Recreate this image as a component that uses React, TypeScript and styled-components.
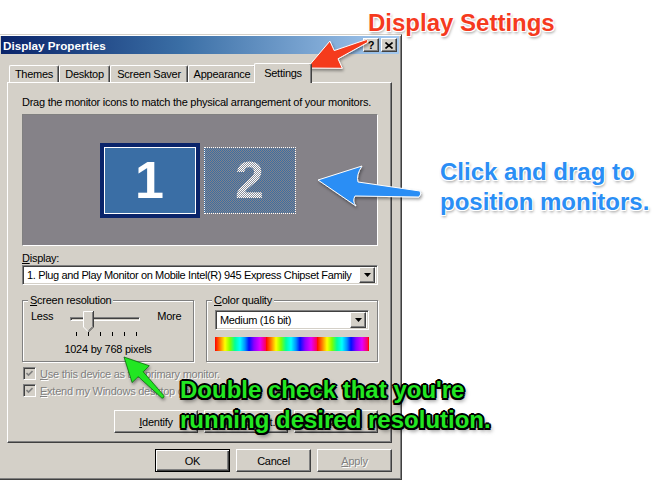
import React from "react";
import styled, { createGlobalStyle, css } from "styled-components";

const FACE = "#d4d0c8";
const SHADOW = "#808080";
const DARK = "#404040";

const GlobalStyle = createGlobalStyle`
  html, body { margin: 0; padding: 0; background: #fff; }
  body {
    font-family: "Liberation Sans", Arial, sans-serif;
    font-size: 11px;
    color: #000;
  }
`;

const Page = styled.div`
  position: relative;
  width: 655px;
  height: 484px;
  overflow: hidden;
  padding-top: 34px;
  box-sizing: border-box;
  background: #fff;
`;

const Window = styled.div`
  width: 402px;
  height: 446px;
  box-sizing: border-box;
  background: ${FACE};
  border-top: 1px solid ${FACE};
  border-right: 1px solid ${DARK};
  border-bottom: 1px solid ${DARK};
  box-shadow: inset 0 1px #fff, inset -1px -1px ${SHADOW};
  padding: 1px 2px 2px 1px;
  display: flex;
  flex-direction: column;
  letter-spacing: -0.25px;
`;

const TitleBar = styled.div`
  height: 18px;
  display: flex;
  align-items: center;
  justify-content: space-between;
  padding: 0 2px;
  background: linear-gradient(90deg, #0a246a 0%, #3a6ea5 45%, #a6caf0 100%);
  color: #fff;
  font-weight: bold;
  font-size: 11.7px;
  letter-spacing: 0;
`;

const CaptionButtons = styled.div`
  display: flex;
  gap: 2px;
`;

const raised = css`
  background: ${FACE};
  border: 1px solid;
  border-color: #fff ${DARK} ${DARK} #fff;
  box-shadow: inset -1px -1px ${SHADOW};
`;

const CaptionButton = styled.div`
  ${raised};
  width: 16px;
  height: 14px;
  box-sizing: border-box;
  display: flex;
  align-items: center;
  justify-content: center;
  color: #000;
  font-size: 11px;
  font-weight: bold;
  line-height: 1;
`;

const Body = styled.div`
  flex: 1;
  display: flex;
  flex-direction: column;
  padding: 9px 7px 0 6px;
`;

const TabRow = styled.div`
  display: flex;
  align-items: flex-end;
  height: 19px;
  padding-left: 2px;
  position: relative;
  z-index: 1;
`;

const Tab = styled.div<{ $active?: boolean; $w: number }>`
  width: ${(p) => p.$w}px;
  height: ${(p) => (p.$active ? "20px" : "17px")};
  box-sizing: border-box;
  padding-bottom: ${(p) => (p.$active ? "2px" : "0")};
  margin: ${(p) => (p.$active ? "0 -2px -1px" : "0")};
  display: flex;
  align-items: center;
  justify-content: center;
  background: ${FACE};
  border-top: 1px solid #fff;
  border-left: 1px solid #fff;
  border-right: 1px solid ${DARK};
  border-radius: 2px 2px 0 0;
  box-shadow: inset -1px 0 ${SHADOW};
  position: relative;
  z-index: ${(p) => (p.$active ? 2 : 1)};
`;

const Panel = styled.div`
  height: 361px;
  box-sizing: border-box;
  border: 1px solid;
  border-color: #fff ${DARK} ${DARK} #fff;
  box-shadow: inset -1px -1px ${SHADOW};
  padding: 13px 13px 9px 14px;
  display: flex;
  flex-direction: column;
`;

const Line = styled.div`
  line-height: 13px;
  white-space: nowrap;
`;

const Arrangement = styled.div`
  height: 132px;
  margin-top: 5px;
  box-sizing: border-box;
  border: 1px solid;
  border-color: ${SHADOW} #fff #fff ${SHADOW};
  background: #858288;
  display: flex;
  align-items: center;
  justify-content: center;
  gap: 4px;
  padding-right: 5px;
`;

const Digit = styled.span`
  font-family: "Liberation Sans", Arial, sans-serif;
  font-weight: bold;
  font-size: 52px;
  line-height: 1;
  letter-spacing: 0;
`;

const MonitorPrimary = styled.div`
  width: 100px;
  height: 75px;
  box-sizing: border-box;
  border: 4px solid #0a246a;
  box-shadow: inset 0 0 0 1px #fff;
  background: #3a6ea5;
  display: flex;
  align-items: center;
  justify-content: center;
  color: #fff;
`;

const MonitorSecondary = styled.div`
  width: 92px;
  height: 67px;
  box-sizing: border-box;
  border: 1px dotted #fff;
  background-color: #5f7896;
  background-image: repeating-conic-gradient(#3a6ea5 0 25%, #858288 0 50%);
  background-size: 2px 2px;
  display: flex;
  align-items: center;
  justify-content: center;
`;

const DitherDigit = styled(Digit)`
  color: transparent;
  background-image: repeating-conic-gradient(#ffffff 0 25%, #8a8f9c 0 50%);
  background-size: 2px 2px;
  -webkit-background-clip: text;
  background-clip: text;
`;

const Label = styled(Line)`
  margin-top: 6px;
`;

const Combo = styled.div<{ $width?: number }>`
  height: 20px;
  width: ${(p) => (p.$width ? `${p.$width}px` : "auto")};
  box-sizing: border-box;
  border: 1px solid;
  border-color: ${SHADOW} #fff #fff ${SHADOW};
  box-shadow: inset 1px 1px ${DARK}, inset -1px -1px ${FACE};
  background: #fff;
  display: flex;
  align-items: center;
  padding: 2px 2px 2px 4px;
  gap: 2px;
`;

const ComboText = styled.div`
  flex: 1;
  white-space: nowrap;
  overflow: hidden;
  line-height: 14px;
  letter-spacing: -0.36px;
`;

const ComboButton = styled.div`
  ${raised};
  width: 16px;
  height: 16px;
  box-sizing: border-box;
  display: flex;
  align-items: center;
  justify-content: center;
  flex: none;
`;

const Groups = styled.div`
  display: grid;
  grid-template-columns: 172px 172px;
  justify-content: space-between;
  margin-top: 9px;
`;

const Group = styled.fieldset`
  margin: 0;
  height: 68px;
  box-sizing: border-box;
  padding: 3px 8px 0 8px;
  border: 1px solid ${SHADOW};
  box-shadow: inset 1px 1px #fff, 1px 1px #fff;
  min-width: 0;
`;

const Legend = styled.legend`
  padding: 0 2px;
  margin-left: -3px;
  line-height: 13px;
  background: ${FACE};
`;

const SliderRow = styled.div`
  display: flex;
  align-items: flex-start;
  gap: 17px;
  line-height: 13px;
`;

const Slider = styled.div`
  position: relative;
  width: 70px;
  height: 26px;
  margin-top: 1px;
`;

const Track = styled.div`
  position: absolute;
  left: 0;
  right: 0;
  top: 6px;
  height: 4px;
  box-sizing: border-box;
  border: 1px solid;
  border-color: ${SHADOW} #fff #fff ${SHADOW};
  box-shadow: inset 1px 1px ${DARK};
`;

const Thumb = styled.svg`
  position: absolute;
  left: 13px;
  top: 0;
`;

const Ticks = styled.div`
  position: absolute;
  left: 6px;
  right: 3px;
  top: 21px;
  display: flex;
  justify-content: space-between;
`;

const TickMark = styled.span`
  width: 1px;
  height: 4px;
  background: #000;
`;

const Resolution = styled(Line)`
  margin-top: 6px;
  text-align: center;
`;

const ColorBar = styled.div`
  height: 14px;
  margin-top: 7px;
  background: repeating-linear-gradient(
    90deg,
    #ff0000 0px,
    #ff7a00 5px,
    #ffff00 10px,
    #80ff00 15px,
    #00ff9a 20px,
    #00ffff 25px,
    #0090ff 30px,
    #0010ff 34px,
    #8a00ff 39px,
    #e000ff 45px,
    #ff0050 51px
  );
`;

const CheckRow = styled.div<{ $first?: boolean }>`
  display: flex;
  align-items: center;
  gap: 4px;
  margin-top: ${(p) => (p.$first ? "5px" : "4px")};
  margin-left: 1px;
  height: 13px;
`;

const CheckBox = styled.div`
  width: 13px;
  height: 13px;
  box-sizing: border-box;
  border: 1px solid;
  border-color: ${SHADOW} #fff #fff ${SHADOW};
  box-shadow: inset 1px 1px ${DARK}, inset -1px -1px ${FACE};
  background: ${FACE};
  display: flex;
  align-items: center;
  justify-content: center;
`;

const Disabled = styled.span`
  color: ${SHADOW};
  text-shadow: 1px 1px 0 #fff;
  white-space: nowrap;
`;

const ButtonRow = styled.div<{ $top?: number }>`
  display: flex;
  justify-content: flex-end;
  gap: 6px;
  margin-top: ${(p) => p.$top ?? 0}px;
`;

const Button = styled.div<{ $width: number; $default?: boolean }>`
  width: ${(p) => p.$width}px;
  height: 23px;
  box-sizing: border-box;
  background: ${FACE};
  border: 1px solid;
  border-color: ${(p) => (p.$default ? "#000" : `#fff ${DARK} ${DARK} #fff`)};
  box-shadow: ${(p) =>
    p.$default
      ? `inset 1px 1px #fff, inset -1px -1px ${DARK}, inset -2px -2px ${SHADOW}`
      : `inset -1px -1px ${SHADOW}`};
  display: flex;
  align-items: center;
  justify-content: center;
  white-space: nowrap;
`;

/* ---------- annotations ---------- */

const Overlay = styled.svg`
  position: absolute;
  left: 0;
  top: 0;
  pointer-events: none;
`;

const Callout = styled.div<{ $x: number; $y: number; $color: string }>`
  position: absolute;
  left: ${(p) => p.$x}px;
  top: ${(p) => p.$y}px;
  color: ${(p) => p.$color};
  font-family: "Liberation Sans", Arial, sans-serif;
  font-weight: bold;
  font-size: 24px;
  line-height: 30px;
  white-space: nowrap;
  text-shadow: -1px -1px 0 #fff, 1px -1px 0 #fff, -1px 1px 0 #fff, 1px 1px 0 #fff,
    0 0 3px #fff, 1px 2px 3px rgba(0, 0, 0, 0.45);
`;

const GreenCallout = styled(Callout)`
  font-size: 24px;
  text-shadow: 2px 0 0 #000, -2px 0 0 #000, 0 2px 0 #000, 0 -2px 0 #000,
    1.5px 1.5px 0 #000, -1.5px 1.5px 0 #000, 1.5px -1.5px 0 #000,
    -1.5px -1.5px 0 #000, 2px 3px 4px rgba(0, 0, 0, 0.6);
`;

const DropArrow = () => (
  <svg width="7" height="4" viewBox="0 0 7 4">
    <path d="M0 0h7L3.5 4z" fill="#000" />
  </svg>
);

const CheckMark = () => (
  <svg width="7" height="7" viewBox="0 0 7 7">
    <path d="M0.5 3L2.5 5L6.5 1" stroke={SHADOW} strokeWidth="1.6" fill="none" />
  </svg>
);

const tabs = [
  { label: "Themes", w: 50 },
  { label: "Desktop", w: 51 },
  { label: "Screen Saver", w: 78 },
  { label: "Appearance", w: 68 },
];

export default function App() {
  return (
    <Page>
      <GlobalStyle />
      <Window>
        <TitleBar>
          <span>Display Properties</span>
          <CaptionButtons>
            <CaptionButton>?</CaptionButton>
            <CaptionButton>
              <svg width="8" height="7" viewBox="0 0 8 7">
                <path d="M0.5 0.5L7.5 6.5M7.5 0.5L0.5 6.5" stroke="#000" strokeWidth="1.6" />
              </svg>
            </CaptionButton>
          </CaptionButtons>
        </TitleBar>
        <Body>
          <TabRow>
            {tabs.map((t) => (
              <Tab key={t.label} $w={t.w}>
                {t.label}
              </Tab>
            ))}
            <Tab $active $w={58}>
              Settings
            </Tab>
          </TabRow>
          <Panel>
            <Line>Drag the monitor icons to match the physical arrangement of your monitors.</Line>
            <Arrangement>
              <MonitorPrimary>
                <Digit>1</Digit>
              </MonitorPrimary>
              <MonitorSecondary>
                <DitherDigit>2</DitherDigit>
              </MonitorSecondary>
            </Arrangement>
            <Label>
              <u>D</u>isplay:
            </Label>
            <Combo>
              <ComboText>1. Plug and Play Monitor on Mobile Intel(R) 945 Express Chipset Family</ComboText>
              <ComboButton>
                <DropArrow />
              </ComboButton>
            </Combo>
            <Groups>
              <Group>
                <Legend>
                  <u>S</u>creen resolution
                </Legend>
                <SliderRow>
                  <span>Less</span>
                  <Slider>
                    <Track />
                    <Thumb width="11" height="22" viewBox="0 0 11 22">
                      <path d="M0.5 0.5H10.5V16L5.5 21L0.5 16Z" fill={FACE} />
                      <path d="M0.5 16V0.5H10" stroke="#fff" fill="none" />
                      <path d="M10.5 0V16L5.5 21" stroke={DARK} fill="none" />
                      <path d="M9.5 1V15.6L5.5 19.6" stroke={SHADOW} fill="none" />
                      <path d="M0.5 16L5 20.5" stroke="#fff" fill="none" />
                    </Thumb>
                    <Ticks>
                      {[0, 1, 2, 3, 4, 5].map((i) => (
                        <TickMark key={i} />
                      ))}
                    </Ticks>
                  </Slider>
                  <span>More</span>
                </SliderRow>
                <Resolution>1024 by 768 pixels</Resolution>
              </Group>
              <Group>
                <Legend>
                  <u>C</u>olor quality
                </Legend>
                <Combo $width={154}>
                  <ComboText>Medium (16 bit)</ComboText>
                  <ComboButton>
                    <DropArrow />
                  </ComboButton>
                </Combo>
                <ColorBar />
              </Group>
            </Groups>
            <CheckRow $first>
              <CheckBox>
                <CheckMark />
              </CheckBox>
              <Disabled>
                <u>U</u>se this device as the primary monitor.
              </Disabled>
            </CheckRow>
            <CheckRow>
              <CheckBox>
                <CheckMark />
              </CheckBox>
              <Disabled>
                <u>E</u>xtend my Windows desktop onto this monitor.
              </Disabled>
            </CheckRow>
            <ButtonRow $top={13}>
              <Button $width={84}>
                <u>I</u>dentify
              </Button>
              <Button $width={84}>
                <u>T</u>roubleshoot...
              </Button>
              <Button $width={84}>
                Ad<u>v</u>anced
              </Button>
            </ButtonRow>
          </Panel>
          <ButtonRow $top={6}>
            <Button $width={75} $default>
              OK
            </Button>
            <Button $width={75}>Cancel</Button>
            <Button $width={75}>
              <Disabled>
                <u>A</u>pply
              </Disabled>
            </Button>
          </ButtonRow>
        </Body>
      </Window>

      <Overlay width="655" height="484" viewBox="0 0 655 484">
        <defs>
          <filter id="sh" x="-20%" y="-20%" width="140%" height="140%">
            <feDropShadow dx="1" dy="2" stdDeviation="1.5" floodColor="#000" floodOpacity="0.4" />
          </filter>
        </defs>
        <path
          d="M307 68L329.9 41.1L334.2 50.6L366.4 39.6Q368.6 40.8 367.6 42.4L338 58.8L342.3 68.3Z"
          fill="#f53a1e"
          stroke="#fff"
          strokeWidth="1"
          filter="url(#sh)"
        />
        <path
          d="M318 180L362 166Q356 175 358 182L420 191Q422 194 419 197L355 196Q352 201 356 206Z"
          fill="#2a8ef5"
          stroke="#fff"
          strokeWidth="1"
          filter="url(#sh)"
        />
        <path
          d="M124 357L149.3 365.8L143.2 371.8L164.1 395.9Q164 398.5 161.9 398.1L138.2 376.6L132.1 382.6Z"
          fill="#22e622"
          stroke="#0a6a0a"
          strokeWidth="0.8"
          filter="url(#sh)"
        />
      </Overlay>

      <Callout $x={368} $y={8} $color="#f53a1e">
        Display Settings
      </Callout>
      <Callout $x={440} $y={157} $color="#2a8ef5">
        Click and drag to
        <br />
        position monitors.
      </Callout>
      <GreenCallout $x={180} $y={375} $color="#22e622">
        Double check that you're
        <br />
        running desired resolution.
      </GreenCallout>
    </Page>
  );
}
